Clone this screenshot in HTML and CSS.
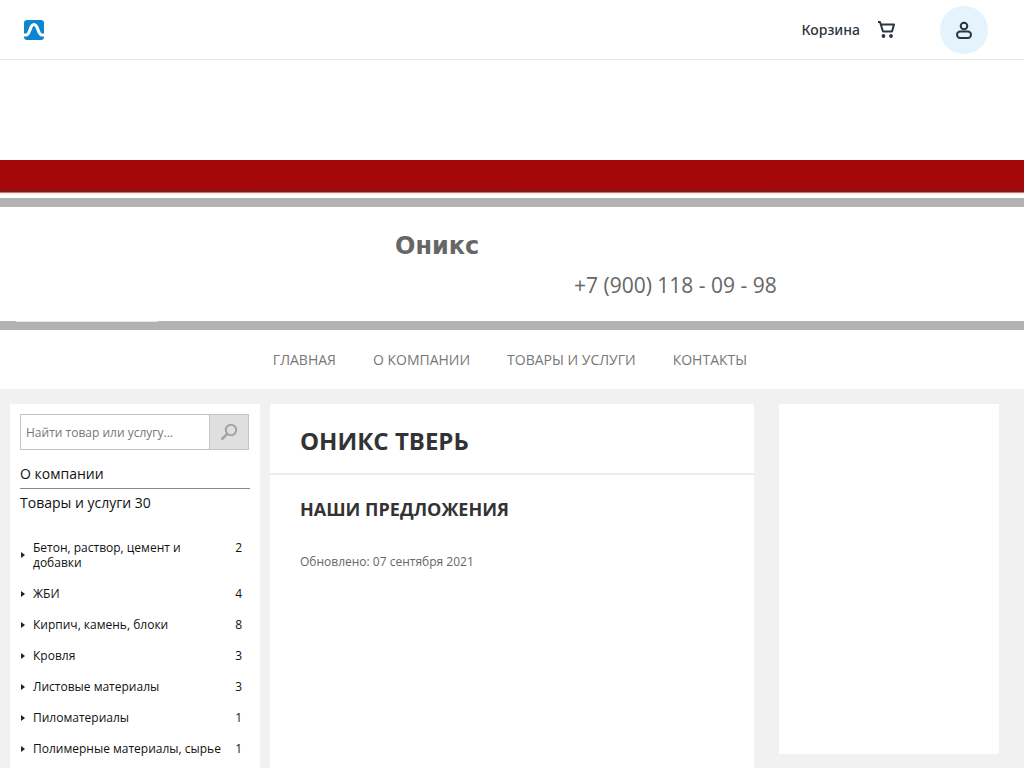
FILE: index.html
```html
<!DOCTYPE html>
<html lang="ru">
<head>
<meta charset="utf-8">
<meta name="viewport" content="width=device-width, initial-scale=1">
<title>Оникс Тверь</title>
<link rel="stylesheet" href="styles.css">
</head>
<body>
<header class="topbar">
  <a class="logo" href="#" aria-label="На главную">
    <svg width="20" height="20" viewBox="0 0 20 20"><rect width="20" height="20" rx="3" fill="#0c86d3"/><path d="M0 15H2C6.500 15 5.500 4.500 10 4.500S13.500 15 18 15H20" fill="none" stroke="#fff" stroke-width="3"/></svg>
  </a>
  <div class="topbar-actions">
    <a class="cart" href="#"><span>Корзина</span>
      <svg width="20" height="20" viewBox="0 0 20 20" fill="none" stroke="#2b3440" stroke-width="2" stroke-linejoin="round"><path d="M2 2H4L7 11.500H16L18 4.500H5"/><circle cx="7.500" cy="16" r="1.900" fill="#2b3440" stroke="none"/><circle cx="15" cy="16" r="1.900" fill="#2b3440" stroke="none"/></svg>
    </a>
    <button class="profile" type="button" aria-label="Профиль">
      <svg width="20" height="20" viewBox="0 0 20 20" fill="none" stroke="#2b3440" stroke-width="2"><circle cx="10" cy="6" r="3.300"/><rect x="3" y="11.500" width="14" height="6.500" rx="3.200"/></svg>
    </button>
  </div>
</header>
<section class="banner">
  <div class="stripe"></div>
  <div class="banner-content">
    <div class="company">Оникс</div>
    <div class="phone">+7 (900) 118 - 09 - 98</div>
  </div>
</section>
<nav class="menu">
  <a href="#">ГЛАВНАЯ</a>
  <a href="#">О КОМПАНИИ</a>
  <a href="#">ТОВАРЫ И УСЛУГИ</a>
  <a href="#">КОНТАКТЫ</a>
</nav>
<div class="workspace">
  <aside class="sidebar">
    <form class="search">
      <input type="text" placeholder="Найти товар или услугу..." aria-label="Найти товар или услугу">
      <button type="submit" aria-label="Найти">
        <svg width="18" height="18" viewBox="0 0 18 18" fill="none" stroke="#a3a3a3" stroke-width="2"><circle cx="11" cy="7" r="5.200"/><path d="M7.200 10.800L1.500 16.500" stroke-width="2.500"/></svg>
      </button>
    </form>
    <a class="section-link" href="#">О компании</a>
    <a class="section-link" href="#">Товары и услуги 30</a>
    <ul class="categories">
      <li><a href="#">Бетон, раствор, цемент и добавки</a><span>2</span></li>
      <li><a href="#">ЖБИ</a><span>4</span></li>
      <li><a href="#">Кирпич, камень, блоки</a><span>8</span></li>
      <li><a href="#">Кровля</a><span>3</span></li>
      <li><a href="#">Листовые материалы</a><span>3</span></li>
      <li><a href="#">Пиломатериалы</a><span>1</span></li>
      <li><a href="#">Полимерные материалы, сырье</a><span>1</span></li>
    </ul>
  </aside>
  <main class="content">
    <h1>ОНИКС ТВЕРЬ</h1>
    <div class="offers">
      <h2>НАШИ ПРЕДЛОЖЕНИЯ</h2>
      <p>Обновлено: 07 сентября 2021</p>
    </div>
  </main>
  <aside class="promo"></aside>
</div>
</body>
</html>
```

FILE: styles.css
```css
* { box-sizing: border-box; }

body {
  margin: 0;
  min-height: 100vh;
  display: flex;
  flex-direction: column;
  background: #fff;
  color: #111;
  font-family: "Open Sans", sans-serif;
  font-size: 14px;
}

a { color: inherit; text-decoration: none; }
svg { display: block; }

.topbar {
  display: flex;
  align-items: center;
  justify-content: space-between;
  height: 60px;
  padding: 0 36px 0 24px;
  border-bottom: 1px solid #e6e6e6;
}
.topbar-actions { display: flex; align-items: center; gap: 44px; }
.cart {
  display: flex;
  align-items: center;
  gap: 16px;
  color: #2b3440;
  font: 500 14px/20px "Noto Sans", sans-serif;
}
.profile {
  display: grid;
  place-items: center;
  width: 48px;
  height: 48px;
  padding: 0;
  border: 0;
  border-radius: 50%;
  background: #e4f3fc;
}

.banner { margin-top: 100px; }
.stripe {
  height: 38px;
  background: linear-gradient(#a50808 0 27px, #8e1010 31px, #7c1c1c 32px, #fbdcdc 33px, #fff 35px);
}
.banner-content {
  position: relative;
  display: grid;
  grid-template-columns: 395fr 179fr 450fr;
  border-top: 9px solid #b2b2b2;
  border-bottom: 9px solid #b2b2b2;
  padding: 23px 0 20px;
  color: #666;
}
/* light highlight on the lower band */
.banner-content::after {
  content: "";
  position: absolute;
  left: 16px;
  bottom: -1px;
  width: 142px;
  height: 1px;
  background: #e6e6e6;
}
.company {
  grid-column: 2 / 4;
  font: bold 24px/32px "DejaVu Sans", sans-serif;
}
.phone {
  grid-column: 3;
  padding-top: 8px;
  font-size: 21px;
  line-height: 31px;
}

.menu {
  display: flex;
  justify-content: center;
  gap: 37px;
  padding: 20px 4px 19px 0;
  color: #777;
  line-height: 20px;
}

.workspace {
  flex: 1;
  display: grid;
  grid-template-columns: 250px 1fr 250px;
  column-gap: 10px;
  padding: 15px 10px 0;
  background: #f1f1f1;
}
.sidebar { padding: 10px 10px 0; background: #fff; }
.search {
  display: flex;
  height: 36px;
  margin: 0 1px 14px 0;
  border: 1px solid #c4c4c4;
}
.search input {
  flex: 1;
  min-width: 0;
  padding: 0 5px;
  border: 0;
  background: #fff;
  font: 12px "Open Sans", sans-serif;
}
.search input::placeholder { color: #777; }
.search button {
  display: grid;
  place-items: center;
  width: 39px;
  padding: 0;
  border: 0;
  border-left: 1px solid #c4c4c4;
  background: #dfdfdf;
}
.section-link { display: block; padding-bottom: 4px; line-height: 20px; }
.section-link + .section-link { padding-top: 4px; border-top: 1px solid #888; }
.categories {
  margin: 23px 0 0;
  padding: 0;
  list-style: none;
  font-size: 12px;
  line-height: 15px;
}
.categories li {
  display: flex;
  align-items: center;
  padding-right: 8px;
  margin-bottom: 16px;
}
.categories li::before {
  content: "";
  margin: 0 8px 0 1px;
  border: solid transparent;
  border-width: 3px 0 3px 4px;
  border-left-color: #222;
}
.categories a { flex: 1; padding-right: 12px; }
.categories span { align-self: flex-start; }

.content { background: #fff; color: #333; }
h1 {
  margin: 0;
  padding: 20px 30px 15px;
  border-bottom: 2px solid #ececec;
  font-size: 24px;
  line-height: 34px;
}
.offers { padding: 22px 30px; }
h2 { margin: 0 0 30px; font-size: 18px; line-height: 25px; }
.offers p { margin: 0; color: #666; font-size: 12px; line-height: 20px; }

.promo { height: 350px; margin: 0 15px; background: #fff; }
```
